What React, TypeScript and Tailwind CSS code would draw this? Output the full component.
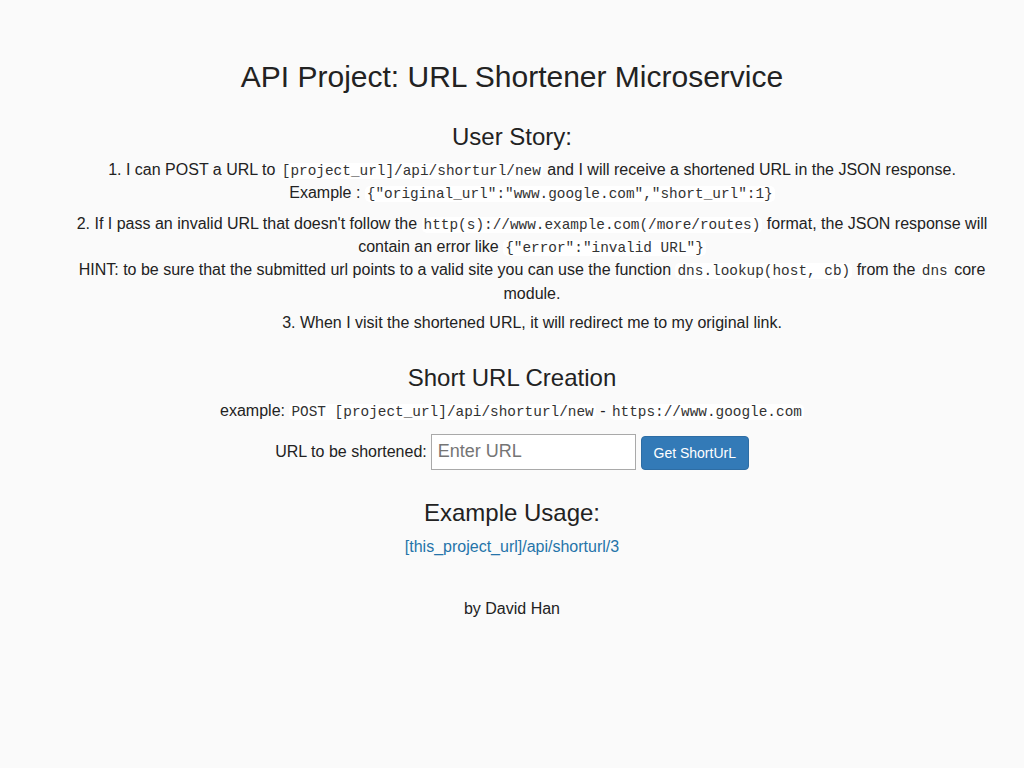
const code = "font-['Liberation_Mono',monospace] text-[90%] bg-white text-[#333] px-[2px] rounded-[5px]";

export default function App() {
  return (
    <div className="min-h-screen bg-[#fafafa] text-[#222] text-center text-[16px] leading-[1.4em] font-['Liberation_Sans',Arial,sans-serif]">
      <div className="px-8 pt-[59px]">
        <h1 className="text-[30px] leading-[1.2] mb-[28px]">API Project: URL Shortener Microservice</h1>

        <h3 className="text-[24px] leading-[1.2] mb-[7px]">User Story:</h3>
        <ol className="list-decimal list-inside pl-10">
          <li className="mb-[7px]">
            I can POST a URL to <code className={code}>[project_url]/api/shorturl/new</code> and I will receive a shortened URL in the JSON response.
            <br />
            Example : <code className={code}>{'{"original_url":"www.google.com","short_url":1}'}</code>
          </li>
          <li className="mb-[7px]">
            If I pass an invalid URL that doesn't follow the <code className={code}>http(s)://www.example.com(/more/routes)</code> format, the JSON response will contain an error like <code className={code}>{'{"error":"invalid URL"}'}</code>
            <br />
            HINT: to be sure that the submitted url points to a valid site you can use the function <code className={code}>dns.lookup(host, cb)</code> from the <code className={code}>dns</code> core module.
          </li>
          <li className="mb-[7px]">When I visit the shortened URL, it will redirect me to my original link.</li>
        </ol>

        <h3 className="text-[24px] leading-[1.2] mt-[29px] mb-[8px]">Short URL Creation</h3>
        <p>
          example: <code className={code}>POST [project_url]/api/shorturl/new</code> - <code className={code}>https://www.google.com</code>
        </p>
        <form className="mt-[10px] flex items-center justify-center" onSubmit={(e) => e.preventDefault()}>
          <label htmlFor="url_input">URL to be shortened: </label>
          <input
            id="url_input"
            type="text"
            placeholder="Enter URL"
            className="ml-[4px] w-[205px] h-[36px] px-[6px] text-[18px] bg-white border border-[#a9a9a9] placeholder:text-[#757575] outline-none"
          />
          <button
            type="submit"
            className="ml-[5px] mt-[2px] w-[108px] h-[34px] rounded-[4px] bg-[#337ab7] border border-[#2e6da4] text-white text-[14px]"
          >
            Get ShortUrL
          </button>
        </form>

        <h3 className="text-[24px] leading-[1.2] mt-[29px] mb-[8px]">Example Usage:</h3>
        <a href="#" className="text-[#2574a9]">[this_project_url]/api/shorturl/3</a>

        <p className="mt-[40px]">by David Han</p>
      </div>
    </div>
  );
}
